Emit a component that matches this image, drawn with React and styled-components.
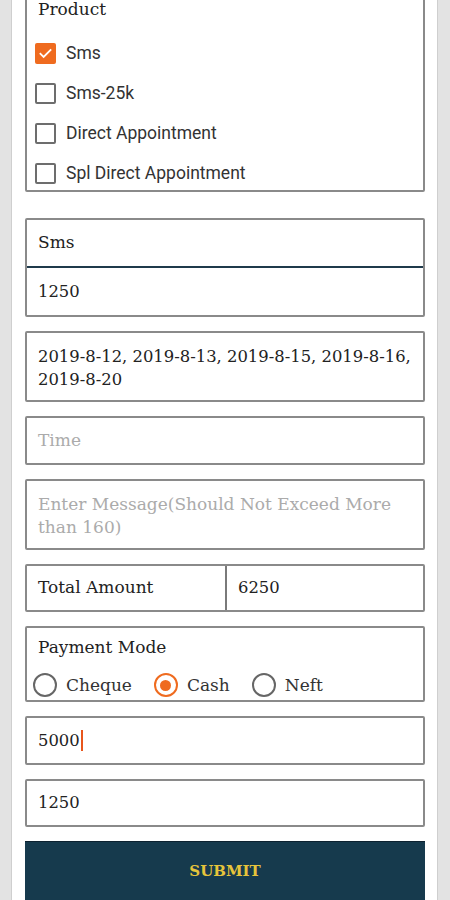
import React from 'react';
import styled, { createGlobalStyle } from 'styled-components';

const GlobalStyle = createGlobalStyle`
  body {
    margin: 0;
    background-color: #e3e3e3;
    font-family: "DejaVu Serif", "Liberation Serif", serif;
    color: #222;
  }
`;

const StyledPage = styled.div`
  margin: 0 12px 0 11px;
  padding: 0 12px 0 13px;
  background-color: #ffffff;
  border-left: 1px solid #cfcfcf;
  border-right: 1px solid #cfcfcf;
  display: flex;
  flex-direction: column;
  gap: 14px;
  overflow: hidden;
  height: 900px;
  box-sizing: border-box;
`;

const StyledBox = styled.div`
  border: 2px solid #8a8a8a;
  border-radius: 2px;
  background-color: #ffffff;
`;

const StyledProductBox = styled(StyledBox)`
  margin-top: -12px;
  margin-bottom: 12px;
  padding: 5px 0 0 0;
`;

const StyledLegend = styled.div`
  padding-left: 11px;
  height: 28px;
  line-height: 28px;
  font-size: 17px;
`;

const StyledCheckList = styled.div`
  margin: 10px 0 -3px;
  display: flex;
  flex-direction: column;
`;

const StyledCheckRow = styled.div`
  display: flex;
  align-items: center;
  gap: 10px;
  height: 40px;
  padding-left: 8px;
  font-family: Roboto, "Liberation Sans", sans-serif;
  font-size: 17.5px;
  color: #333;
`;

const StyledCheckBox = styled.span`
  width: ${(p) => (p.checked ? '21px' : '17px')};
  height: ${(p) => (p.checked ? '21px' : '17px')};
  border: ${(p) => (p.checked ? 'none' : '2px solid #6d6d6d')};
  background-color: ${(p) => (p.checked ? '#ef6b1f' : 'transparent')};
  border-radius: 2px;
  display: flex;
  align-items: center;
  justify-content: center;
`;

const StyledField = styled.div`
  min-height: ${(p) => (p.grouped ? '47.5px' : '44.5px')};
  padding: 10px 11px;
  box-sizing: border-box;
  display: flex;
  align-items: center;
  font-size: ${(p) => (p.small ? '16.4px' : '17px')};
  line-height: 23px;
  color: ${(p) => (p.placeholder ? '#ababab' : '#222')};
  border-bottom: ${(p) => (p.divider ? '2px solid #1f3a4b' : 'none')};
`;

const StyledTallField = styled(StyledField)`
  min-height: 67px;
  align-items: flex-start;
  padding: 12px 11px 9px;
`;

const StyledSplitRow = styled(StyledBox)`
  display: grid;
  grid-template-columns: 200px 1fr;
`;

const StyledSplitCell = styled(StyledField)`
  border-right: ${(p) => (p.first ? '2px solid #7a7a7a' : 'none')};
`;

const StyledPaymentBox = styled(StyledBox)`
  padding: 5px 0 3px;
`;

const StyledRadioGroup = styled.div`
  display: flex;
  align-items: center;
  gap: 22px;
  padding-left: 6px;
  margin-top: 12px;
`;

const StyledRadioOption = styled.label`
  display: flex;
  align-items: center;
  gap: 9px;
  font-size: 17px;
  color: #333;
`;

const StyledRadio = styled.span`
  width: 20px;
  height: 20px;
  border-radius: 50%;
  border: 2px solid ${(p) => (p.checked ? '#ef6b1f' : '#666')};
  display: flex;
  align-items: center;
  justify-content: center;
`;

const StyledRadioDot = styled.span`
  width: 11px;
  height: 11px;
  border-radius: 50%;
  background-color: #ef6b1f;
`;

const StyledCursor = styled.span`
  display: inline-block;
  width: 2px;
  height: 21px;
  margin-left: 1px;
  background-color: #e8561c;
`;

const StyledSubmit = styled.button`
  height: 70px;
  border: none;
  border-top: 1px solid #0d2230;
  background-color: #163a4d;
  color: #e6c43b;
  font-family: "DejaVu Serif", "Liberation Serif", serif;
  font-weight: bold;
  font-size: 15px;
  line-height: 18px;
  padding: 20px 0 0;
  display: flex;
  justify-content: center;
  align-items: flex-start;
  cursor: pointer;
`;

const products = [
  { label: 'Sms', checked: true },
  { label: 'Sms-25k' },
  { label: 'Direct Appointment' },
  { label: 'Spl Direct Appointment' },
];

const modes = [
  { label: 'Cheque' },
  { label: 'Cash', checked: true },
  { label: 'Neft' },
];

const CheckMark = () => (
  <svg width="15" height="15" viewBox="0 0 24 24" fill="none">
    <path d="M4 12.5l5 5L20 6.5" stroke="#fff" strokeWidth="3" strokeLinecap="square" />
  </svg>
);

const App = () => {
  return (
    <>
      <GlobalStyle />
      <StyledPage>
        <StyledProductBox>
          <StyledLegend>Product</StyledLegend>
          <StyledCheckList>
            {products.map((item) => (
              <StyledCheckRow key={item.label}>
                <StyledCheckBox checked={item.checked}>
                  {item.checked && <CheckMark />}
                </StyledCheckBox>
                {item.label}
              </StyledCheckRow>
            ))}
          </StyledCheckList>
        </StyledProductBox>

        <StyledBox>
          <StyledField grouped divider>Sms</StyledField>
          <StyledField grouped small>1250</StyledField>
        </StyledBox>

        <StyledBox>
          <StyledTallField small>
            2019-8-12, 2019-8-13, 2019-8-15, 2019-8-16, 2019-8-20
          </StyledTallField>
        </StyledBox>

        <StyledBox>
          <StyledField placeholder>Time</StyledField>
        </StyledBox>

        <StyledBox>
          <StyledTallField placeholder>
            Enter Message(Should Not Exceed More than 160)
          </StyledTallField>
        </StyledBox>

        <StyledSplitRow>
          <StyledSplitCell first>Total Amount</StyledSplitCell>
          <StyledSplitCell small>6250</StyledSplitCell>
        </StyledSplitRow>

        <StyledPaymentBox>
          <StyledLegend>Payment Mode</StyledLegend>
          <StyledRadioGroup>
            {modes.map((mode) => (
              <StyledRadioOption key={mode.label}>
                <StyledRadio checked={mode.checked}>
                  {mode.checked && <StyledRadioDot />}
                </StyledRadio>
                {mode.label}
              </StyledRadioOption>
            ))}
          </StyledRadioGroup>
        </StyledPaymentBox>

        <StyledBox>
          <StyledField small>
            5000
            <StyledCursor />
          </StyledField>
        </StyledBox>

        <StyledBox>
          <StyledField small>1250</StyledField>
        </StyledBox>

        <StyledSubmit>SUBMIT</StyledSubmit>
      </StyledPage>
    </>
  );
};

export default App;
